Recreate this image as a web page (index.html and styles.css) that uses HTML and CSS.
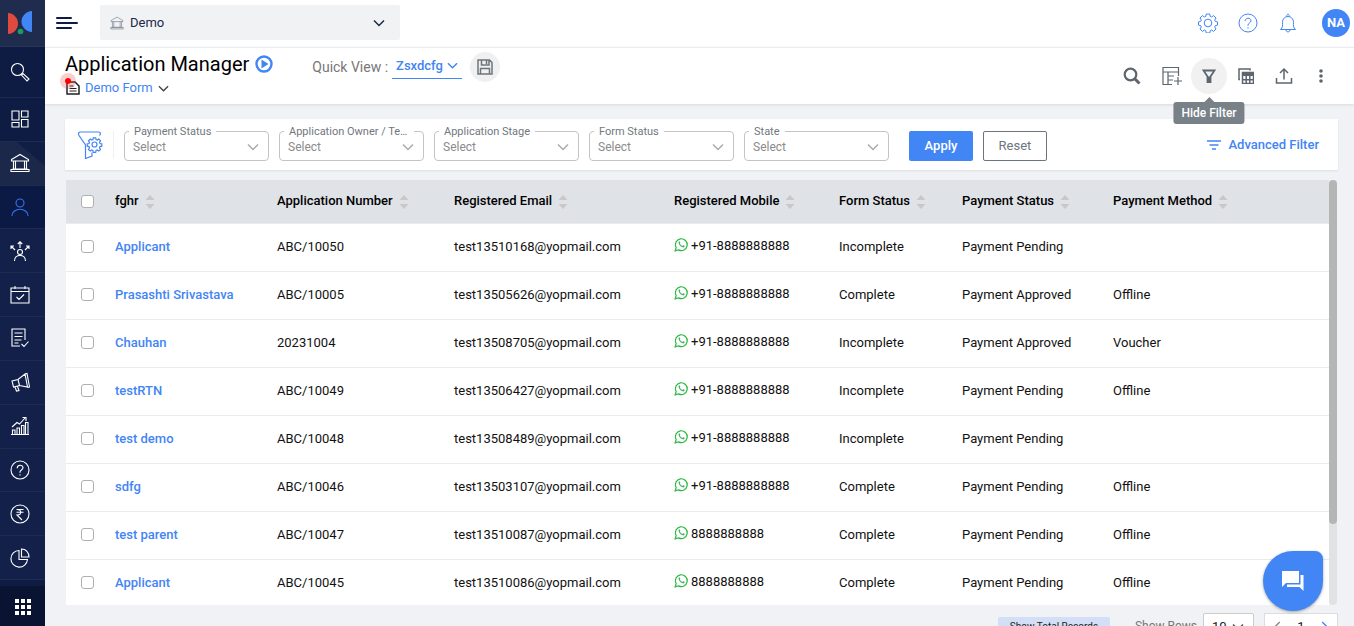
FILE: index.html
```html
<!DOCTYPE html>
<html lang="en">
<head>
  <meta charset="UTF-8">
  <meta name="viewport" content="width=device-width, initial-scale=1">
  <title>Application Manager</title>
  <link rel="stylesheet" href="styles.css">
</head>
<body>

  <!-- shared icons -->
  <svg class="sprite" aria-hidden="true">
    <symbol id="chevron" viewBox="0 0 12 12"><path d="M1 3.500l5 5 5-5" fill="none" stroke="currentColor" stroke-width="1.500"/></symbol>
    <symbol id="sort" viewBox="0 0 10 16"><path d="M5 1l4.500 5h-9zM5 15l4.500-5h-9z" fill="#c8c8c8"/></symbol>
    <symbol id="whatsapp" viewBox="0 0 16 16">
      <path d="M1.300 14.700l1-3.500a6.300 6.300 0 1 1 2.500 2.500z" fill="none" stroke="#2cb742" stroke-width="1.300"/>
      <path d="M5.800 4.500c-.9.500-1.100 1.600-.6 2.700.8 1.800 2.200 3.200 4.200 3.800 1 .3 1.900-.2 2.100-1.300l-1.700-.9-.8.900c-1.400-.5-2.300-1.400-2.900-2.700l.7-.8z" fill="#2cb742"/>
    </symbol>
    <symbol id="bank" viewBox="0 0 20 20">
      <path d="M1.500 6.500L10 1.500l8.500 5v1.500h-17zM3.500 8v8M5.500 8v8M14.500 8v8M16.500 8v8M2.500 16h15M1 18.500h18v-2H1z"/>
    </symbol>
    <symbol id="gear" viewBox="0 0 20 20">
      <circle cx="10" cy="10" r="3.800"/>
      <path d="M8.300 1h3.400l.5 2.300 1.400.6 2-1.300 2.400 2.400-1.300 2 .6 1.400 2.200.5v3.200l-2.200.5-.6 1.400 1.300 2-2.400 2.400-2-1.300-1.400.6-.5 2.300H8.300l-.5-2.300-1.400-.6-2 1.300L2 16l1.300-2-.6-1.400L.5 12.100V8.900l2.200-.5.6-1.400L2 5l2.400-2.400 2 1.300 1.400-.6z"/>
    </symbol>
    <symbol id="help" viewBox="0 0 20 20">
      <circle cx="10" cy="10" r="9"/><path d="M7.200 8.200c0-4 5.800-3.800 5.800-.4 0 2-3 2.300-3 4.200v.8M10 14.200v1.400"/>
    </symbol>
  </svg>

  <div class="app">
    <nav class="sidebar" aria-label="Main">
      <a href="#" class="logo" aria-label="Home">
        <svg width="26" height="24" viewBox="0 0 26 24">
          <path d="M1 2c6 .5 10 5 10 10.500S7 22.500 1 23z" fill="#de4b3e"/>
          <path d="M25 0c-6 .5-10.500 5-10.500 10.500S19 20.500 25 21z" fill="#4285f4"/>
          <circle cx="13.500" cy="20.500" r="2.800" fill="#1a9c5b"/>
        </svg>
      </a>
      <a href="#" class="nav-item nav-search" aria-label="Search">
        <svg viewBox="0 0 20 20"><circle cx="7.500" cy="7.500" r="6"/><path d="M11.500 13l1.500-1.500 6 5.500-2 2z"/></svg>
      </a>
      <a href="#" class="nav-item" aria-label="Dashboard">
        <svg viewBox="0 0 20 20"><path d="M2 2h7v9H2zM11.500 2H18v6h-6.500zM2 13.500h7V18H2zM11.500 10.500H18V18h-6.500z"/></svg>
      </a>
      <a href="#" class="nav-item nav-parent" aria-label="Institute"><svg><use href="#bank"/></svg></a>
      <a href="#" class="nav-item nav-active" aria-label="Applicants">
        <svg viewBox="0 0 20 20"><circle cx="10" cy="6" r="4"/><path d="M2 19c0-9 16-9 16 0"/></svg>
      </a>
      <a href="#" class="nav-item" aria-label="Allocation">
        <svg viewBox="0 0 20 20"><circle cx="10" cy="11" r="2.500"/><path d="M4.500 20c0-7.500 11-7.500 11 0M10 7V1M7.800 3L10 .8 12.200 3M5 9L1 5M1 8V5h3M15 9l4-4M16 5h3v3"/></svg>
      </a>
      <a href="#" class="nav-item" aria-label="Calendar">
        <svg viewBox="0 0 20 20"><path d="M1 3h18v15H1zM1 6.500h18M5 1v3M15 1v3M6.500 12l2.500 2.500L14 9.500"/></svg>
      </a>
      <a href="#" class="nav-item" aria-label="Forms">
        <svg viewBox="0 0 20 20"><path d="M15 12V1H2v17h8M4.500 5h8M4.500 8.500h8M4.500 12h7M4.500 15h4M11.500 16l2.500 2.500 4.500-5"/></svg>
      </a>
      <a href="#" class="nav-item" aria-label="Campaigns">
        <svg viewBox="0 0 20 20"><path d="M2 9l6-1.500L15 2l2.500 13-8-1.500-6 1.500zM8 7.500l1.500 6M15 2l2-.5L19.500 15l-2 .5M5 15l1.500 4 2.500-.5-1.500-4"/></svg>
      </a>
      <a href="#" class="nav-item" aria-label="Reports">
        <svg viewBox="0 0 20 20"><path d="M1 18.500h18M2.500 18v-4h2.500v4M7 18v-6h2.500v6M11.500 18V9.500H14V18M15.500 18V6.500H18V18M2 11l5-4.500 2.500 1.500L15 2M12.500 1.500H16V5"/></svg>
      </a>
      <a href="#" class="nav-item" aria-label="Help"><svg><use href="#help"/></svg></a>
      <a href="#" class="nav-item" aria-label="Payments">
        <svg viewBox="0 0 20 20"><circle cx="10" cy="10" r="9"/><path d="M6.500 5.500h7M6.500 8.200h7M7 5.500c5 0 5 5.500 0 5.500l5 5"/></svg>
      </a>
      <a href="#" class="nav-item" aria-label="Analytics">
        <svg viewBox="0 0 20 20"><path d="M9 2.500a8.300 8.300 0 1 0 8.500 9H9zM11.500 1v8H19c0-4.500-3-8-7.500-8z"/></svg>
      </a>
      <button class="apps" type="button" aria-label="Apps">
        <svg width="18" height="18" viewBox="0 0 18 18" fill="#fff"><path d="M1 1h4v4H1zM7 1h4v4H7zM13 1h4v4h-4zM1 7h4v4H1zM7 7h4v4H7zM13 7h4v4h-4zM1 13h4v4H1zM7 13h4v4H7zM13 13h4v4h-4z"/></svg>
      </button>
    </nav>

    <div class="main">
      <header class="topbar">
        <button class="menu-btn" type="button" aria-label="Menu">
          <svg width="22" height="14" viewBox="0 0 22 14"><path d="M1 2h14M1 7h20M1 12h14" stroke="#0e1b42" stroke-width="2" stroke-linecap="round"/></svg>
        </button>
        <button class="institute" type="button">
          <svg class="institute-icon" width="14" height="14"><use href="#bank"/></svg>
          <span>Demo</span>
          <svg class="institute-arrow" width="12" height="12"><use href="#chevron"/></svg>
        </button>
        <div class="top-actions">
          <button type="button" aria-label="Settings"><svg><use href="#gear"/></svg></button>
          <button type="button" aria-label="Help"><svg><use href="#help"/></svg></button>
          <button type="button" aria-label="Notifications">
            <svg viewBox="0 0 20 20"><path d="M2.500 16.500c2.500-2 2-4.500 2-7 0-8 11-8 11 0 0 2.500-.5 5 2 7zM8 17c0 2.500 4 2.500 4 0M8.800 3.500c-.5-3 2.900-3 2.400 0"/></svg>
          </button>
          <button class="avatar" type="button">NA</button>
        </div>
      </header>

      <section class="page-head">
        <div class="page-title">
          <h1>Application Manager
            <svg width="18" height="18" viewBox="0 0 18 18"><circle cx="9" cy="9" r="7.500" fill="none" stroke="#4285f4" stroke-width="2.400"/><path d="M6.500 4.500v9L13.500 9z" fill="#4285f4"/></svg>
          </h1>
          <button class="form-picker" type="button">
            <span class="form-icon">
              <svg width="14" height="14" viewBox="0 0 14 14"><path d="M1 1h8l4 4v8H1z" fill="#fff" stroke="#222" stroke-width="1.500"/><path d="M3.500 5h4M3.500 7.500h7M3.500 10h7" stroke="#222" stroke-width="1.200"/></svg>
            </span>
            Demo Form
            <svg class="form-arrow" width="11" height="11"><use href="#chevron"/></svg>
          </button>
        </div>
        <div class="quick-view">
          <span>Quick View :</span>
          <button class="view-picker" type="button">Zsxdcfg <svg width="11" height="11"><use href="#chevron"/></svg></button>
          <button class="round-btn save-btn" type="button" aria-label="Save view">
            <svg width="16" height="16" viewBox="0 0 16 16" fill="none" stroke="#6c757d" stroke-width="1.500"><path d="M1 1h11.500L15 3.500V15H1zM4.500 1v5H12V1M3.500 15V9.500h9V15M9.500 1.500V5"/></svg>
          </button>
        </div>
        <div class="head-actions">
          <button type="button" aria-label="Search">
            <svg width="18" height="18" viewBox="0 0 18 18" fill="none" stroke="#5d666f"><circle cx="7.500" cy="7.500" r="5.800" stroke-width="2.200"/><path d="M11.500 11.500l5 5" stroke-width="3"/></svg>
          </button>
          <button type="button" aria-label="Add column">
            <svg width="20" height="20" viewBox="0 0 20 20" fill="none" stroke="#5d666f" stroke-width="1.200"><path d="M10 18.500H1v-17h15.500V10M1 6h15.500M6 6v12.500M6 10h6M6 14h5M16 11v8M12 15h8"/></svg>
          </button>
          <button class="filter-toggle" type="button" aria-label="Hide Filter" aria-describedby="filter-tip">
            <svg width="14" height="14" viewBox="0 0 14 14"><path d="M1.500 1.500h11L8.500 7.500V13h-3V7.500z" fill="none" stroke="#5d666f" stroke-width="1.800"/><path d="M5.500 7.500h3V13h-3z" fill="#5d666f"/></svg>
            <span class="tooltip" id="filter-tip" role="tooltip">Hide Filter</span>
          </button>
          <button type="button" aria-label="Calculator">
            <svg width="16" height="16" viewBox="0 0 16 16" fill="none" stroke="#5d666f" stroke-width="1.500"><path d="M2 11.500H1V1h11v1.500M4.500 4.500h11v11h-11z"/><path d="M4.500 6.500h11" stroke-width="3"/><path d="M4.500 11.700h11M8.200 8v7M11.800 8v7"/></svg>
          </button>
          <button type="button" aria-label="Export">
            <svg width="18" height="18" viewBox="0 0 18 18" fill="none" stroke="#5d666f" stroke-width="1.500"><path d="M1.500 11v5h15v-5M9 12.500V2M5 6l4-4 4 4"/></svg>
          </button>
          <button type="button" aria-label="More">
            <svg width="4" height="14" viewBox="0 0 4 14" fill="#5d666f"><circle cx="2" cy="2" r="1.800"/><circle cx="2" cy="7" r="1.800"/><circle cx="2" cy="12" r="1.800"/></svg>
          </button>
        </div>
      </section>

      <main class="content">
        <form class="filters">
          <div class="filter-icon">
            <svg width="26" height="28" viewBox="0 0 26 28" fill="none" stroke="#4285f4" stroke-width="1.200">
              <path d="M15 21.500V25l-6.500 2.500V14L2 4.500C1 2.500 1.500 1 3.500 1h18c2 0 2.500 2 1 3.500"/>
              <circle cx="17.500" cy="13.500" r="2.500"/>
              <path d="M16.300 6.800h2.400l.4 1.800 1.200.5 1.500-1 1.700 1.700-1 1.500.5 1.200 1.800.3v2.400l-1.800.4-.5 1.200 1 1.500-1.700 1.700-1.500-1-1.200.5-.4 1.800h-2.400l-.4-1.800-1.200-.5-1.500 1-1.700-1.700 1-1.500-.5-1.200-1.800-.4v-2.400l1.800-.3.500-1.200-1-1.500 1.700-1.700 1.500 1 1.200-.5z"/>
            </svg>
          </div>
          <div class="field">
            <label for="paymentStatus">Payment Status</label>
            <select id="paymentStatus"><option>Select</option></select>
            <svg><use href="#chevron"/></svg>
          </div>
          <div class="field">
            <label for="owner">Application Owner / Team</label>
            <select id="owner"><option>Select</option></select>
            <svg><use href="#chevron"/></svg>
          </div>
          <div class="field">
            <label for="stage">Application Stage</label>
            <select id="stage"><option>Select</option></select>
            <svg><use href="#chevron"/></svg>
          </div>
          <div class="field">
            <label for="formStatus">Form Status</label>
            <select id="formStatus"><option>Select</option></select>
            <svg><use href="#chevron"/></svg>
          </div>
          <div class="field">
            <label for="state">State</label>
            <select id="state"><option>Select</option></select>
            <svg><use href="#chevron"/></svg>
          </div>
          <button class="btn btn-apply" type="button">Apply</button>
          <button class="btn btn-reset" type="reset">Reset</button>
          <a href="#" class="advanced">
            <svg width="14" height="10" viewBox="0 0 14 10" stroke="#4285f4" stroke-width="1.600"><path d="M0 1h14M2.500 5h9M5 9h4"/></svg>
            Advanced Filter
          </a>
        </form>

        <div class="table-wrap">
          <div class="table-scroll">
            <table>
              <colgroup>
                <col class="c-check"><col class="c-name"><col class="c-number"><col class="c-email">
                <col class="c-mobile"><col class="c-form"><col class="c-pay"><col>
              </colgroup>
              <thead>
                <tr>
                  <th><input type="checkbox" aria-label="Select all"></th>
                  <th>fghr<svg><use href="#sort"/></svg></th>
                  <th>Application Number<svg><use href="#sort"/></svg></th>
                  <th>Registered Email<svg><use href="#sort"/></svg></th>
                  <th>Registered Mobile<svg><use href="#sort"/></svg></th>
                  <th>Form Status<svg><use href="#sort"/></svg></th>
                  <th>Payment Status<svg><use href="#sort"/></svg></th>
                  <th>Payment Method<svg><use href="#sort"/></svg></th>
                </tr>
              </thead>
              <tbody>
                <tr>
                  <td><input type="checkbox" aria-label="Select row"></td>
                  <td><a href="#">Applicant</a></td>
                  <td>ABC/10050</td>
                  <td>test13510168@yopmail.com</td>
                  <td class="mobile"><svg><use href="#whatsapp"/></svg>+91-8888888888</td>
                  <td>Incomplete</td>
                  <td>Payment Pending</td>
                  <td></td>
                </tr>
                <tr>
                  <td><input type="checkbox" aria-label="Select row"></td>
                  <td><a href="#">Prasashti Srivastava</a></td>
                  <td>ABC/10005</td>
                  <td>test13505626@yopmail.com</td>
                  <td class="mobile"><svg><use href="#whatsapp"/></svg>+91-8888888888</td>
                  <td>Complete</td>
                  <td>Payment Approved</td>
                  <td>Offline</td>
                </tr>
                <tr>
                  <td><input type="checkbox" aria-label="Select row"></td>
                  <td><a href="#">Chauhan</a></td>
                  <td>20231004</td>
                  <td>test13508705@yopmail.com</td>
                  <td class="mobile"><svg><use href="#whatsapp"/></svg>+91-8888888888</td>
                  <td>Incomplete</td>
                  <td>Payment Approved</td>
                  <td>Voucher</td>
                </tr>
                <tr>
                  <td><input type="checkbox" aria-label="Select row"></td>
                  <td><a href="#">testRTN</a></td>
                  <td>ABC/10049</td>
                  <td>test13506427@yopmail.com</td>
                  <td class="mobile"><svg><use href="#whatsapp"/></svg>+91-8888888888</td>
                  <td>Incomplete</td>
                  <td>Payment Pending</td>
                  <td>Offline</td>
                </tr>
                <tr>
                  <td><input type="checkbox" aria-label="Select row"></td>
                  <td><a href="#">test demo</a></td>
                  <td>ABC/10048</td>
                  <td>test13508489@yopmail.com</td>
                  <td class="mobile"><svg><use href="#whatsapp"/></svg>+91-8888888888</td>
                  <td>Incomplete</td>
                  <td>Payment Pending</td>
                  <td></td>
                </tr>
                <tr>
                  <td><input type="checkbox" aria-label="Select row"></td>
                  <td><a href="#">sdfg</a></td>
                  <td>ABC/10046</td>
                  <td>test13503107@yopmail.com</td>
                  <td class="mobile"><svg><use href="#whatsapp"/></svg>+91-8888888888</td>
                  <td>Complete</td>
                  <td>Payment Pending</td>
                  <td>Offline</td>
                </tr>
                <tr>
                  <td><input type="checkbox" aria-label="Select row"></td>
                  <td><a href="#">test parent</a></td>
                  <td>ABC/10047</td>
                  <td>test13510087@yopmail.com</td>
                  <td class="mobile"><svg><use href="#whatsapp"/></svg>8888888888</td>
                  <td>Complete</td>
                  <td>Payment Pending</td>
                  <td>Offline</td>
                </tr>
                <tr>
                  <td><input type="checkbox" aria-label="Select row"></td>
                  <td><a href="#">Applicant</a></td>
                  <td>ABC/10045</td>
                  <td>test13510086@yopmail.com</td>
                  <td class="mobile"><svg><use href="#whatsapp"/></svg>8888888888</td>
                  <td>Complete</td>
                  <td>Payment Pending</td>
                  <td>Offline</td>
                </tr>
              </tbody>
            </table>
          </div>
          <div class="scroll-track"><div class="scroll-thumb"></div></div>
        </div>

        <div class="table-footer">
          <button class="total-btn" type="button">Show Total Records</button>
          <label for="rows">Show Rows</label>
          <div class="rows-field">
            <select id="rows"><option>10</option></select>
            <svg><use href="#chevron"/></svg>
          </div>
          <div class="pager">
            <button type="button" aria-label="Previous"><svg class="prev"><use href="#chevron"/></svg></button>
            <span>1</span>
            <button type="button" aria-label="Next"><svg class="next"><use href="#chevron"/></svg></button>
          </div>
        </div>
      </main>
    </div>
  </div>

  <button class="chat" type="button" aria-label="Chat">
    <svg width="22" height="22" viewBox="0 0 22 22" fill="#fff"><path d="M0 1h17v12H4l-4 4zM18.500 5H21.500v16l-4-4H5v-2.500h13.500z"/></svg>
  </button>

</body>
</html>
```
FILE: styles.css
```css
* { box-sizing: border-box; }

body {
  margin: 0;
  overflow: hidden;
  font-family: Roboto, "Liberation Sans", sans-serif;
  font-size: 13px;
  color: #111;
  background: #f1f2f5;
}

button {
  font: inherit;
  color: inherit;
  padding: 0;
  border: 0;
  background: none;
  cursor: pointer;
}
a { color: #4285f4; text-decoration: none; }
svg { flex: none; }
.sprite { position: absolute; width: 0; height: 0; }

.app { display: flex; height: 100vh; }

/* sidebar */
.sidebar {
  flex: none;
  width: 45px;
  display: flex;
  flex-direction: column;
  background: #0e1b42;
}
.logo {
  display: flex;
  align-items: center;
  height: 47px;
  padding-left: 7px;
  background: #1f2c4e;
  border-bottom: 1px solid #2a3658;
}
.nav-item {
  flex: 1;
  display: flex;
  align-items: center;
  padding-left: 10px;
  background: #13214a;
  border-bottom: 1px solid #1d2b52;
}
.nav-item svg {
  width: 20px;
  height: 20px;
  fill: none;
  stroke: #fff;
  stroke-width: 1.1;
}
.nav-search { flex: none; height: 51px; background: #0e1b42; }
.nav-search + .nav-item { background: #0e1b42; }
.nav-parent { background: linear-gradient(40deg, #1b2849 70%, #101d45 71%); }
.nav-active { background: #0b1a45; }
.nav-active svg { stroke: #3574f0; }
.apps {
  height: 40px;
  margin-top: 6px;
  padding-top: 6px;
  background: #091433;
}

/* top bar */
.main { flex: 1; min-width: 0; background: #f1f2f5; }
.topbar {
  display: flex;
  align-items: center;
  height: 47px;
  padding: 0 4px 2px 11px;
  background: #fff;
}
.menu-btn { display: flex; }
.institute {
  display: flex;
  align-items: center;
  width: 300px;
  height: 35px;
  margin-left: 22px;
  padding: 0 15px 0 10px;
  background: #f1f2f4;
  border-radius: 2px;
  color: #1b2849;
}
.institute span { margin-left: 6px; }
.institute-icon { fill: none; stroke: #7d8594; }
.institute-arrow { margin-left: auto; }
.top-actions {
  display: flex;
  align-items: center;
  gap: 20px;
  margin-left: auto;
}
.top-actions button { display: flex; }
.top-actions svg {
  width: 20px;
  height: 20px;
  fill: none;
  stroke: #4285f4;
}
.top-actions .avatar {
  align-items: center;
  justify-content: center;
  width: 28px;
  height: 28px;
  margin-left: 4px;
  border-radius: 50%;
  background: #4285f4;
  color: #fff;
  font-weight: bold;
}

/* page header */
.page-head {
  display: flex;
  align-items: center;
  height: 57px;
  padding: 0 18px 0 20px;
  background: #fff;
  border-top: 1px solid #ebecee;
  box-shadow: 0 1px 3px rgba(0,0,0,0.1);
}
.page-title h1 {
  display: flex;
  align-items: center;
  gap: 6px;
  margin: 0;
  font-size: 20px;
  line-height: 24px;
  font-weight: 400;
  color: #000;
}
.form-picker {
  display: flex;
  align-items: center;
  line-height: 24px;
  padding-left: 1px;
  color: #4285f4;
}
.form-icon {
  position: relative;
  display: flex;
  margin-right: 5px;
}
.form-icon::before {
  content: "";
  position: absolute;
  left: -6px;
  top: -8px;
  width: 6px;
  height: 6px;
  border: 5px solid rgba(230,60,60,0.25);
  border-radius: 50%;
  box-sizing: content-box;
  background: #f00;
  background-clip: padding-box;
}
.form-arrow { margin-left: 5px; color: #444; }
.quick-view {
  display: flex;
  align-items: center;
  margin: 0 0 18px 39px;
  font-size: 14px;
  color: #777;
}
.view-picker {
  display: flex;
  align-items: center;
  gap: 4px;
  height: 24px;
  margin-left: 4px;
  padding: 0 4px 2px;
  border-bottom: 1px solid #4285f4;
  font-size: 13px;
  font-weight: 500;
  color: #4285f4;
}
.round-btn {
  display: flex;
  align-items: center;
  justify-content: center;
  width: 30px;
  height: 30px;
  border-radius: 50%;
  background: #f0f0f0;
}
.save-btn { margin-left: 8px; }
.head-actions {
  display: flex;
  align-items: center;
  margin-left: auto;
}
.head-actions button {
  display: flex;
  align-items: center;
  justify-content: center;
  width: 38px;
  height: 36px;
}
.head-actions button:first-child { width: 42px; }
.head-actions button:last-child { width: 30px; margin-left: 3px; }
.head-actions .filter-toggle {
  position: relative;
  width: 36px;
  border-radius: 50%;
  background: #f1f1f1;
}
.tooltip {
  position: absolute;
  z-index: 2;
  top: 44px;
  left: 50%;
  transform: translateX(-50%);
  padding: 0 8px;
  border-radius: 3px;
  background: #788188;
  color: #fff;
  font-size: 12px;
  font-weight: 500;
  line-height: 22px;
  white-space: nowrap;
}
.tooltip::before {
  content: "";
  position: absolute;
  left: 50%;
  top: -5px;
  margin-left: -5px;
  border: 5px solid transparent;
  border-top: 0;
  border-bottom-color: #788188;
}

/* filters */
.content { padding: 15px 16px 0 20px; }
.filters {
  display: flex;
  align-items: center;
  gap: 10px;
  height: 51px;
  padding: 0 19px 0 12px;
  background: #fff;
  box-shadow: 0 1px 2px rgba(0,0,0,0.08);
}
.filter-icon {
  display: flex;
  width: 37px;
  border-right: 1px solid #f0f0f0;
}
.field {
  position: relative;
  flex: 0 1 145px;
  min-width: 0;
  margin-top: 3px;
}
.field label {
  position: absolute;
  left: 5px;
  top: -6px;
  max-width: 130px;
  padding: 0 5px;
  overflow: hidden;
  background: #fff;
  color: #71777d;
  font-size: 11px;
  line-height: 14px;
  text-overflow: ellipsis;
  white-space: nowrap;
}
.field select {
  appearance: none;
  display: block;
  width: 100%;
  height: 30px;
  padding: 2px 8px 0;
  border: 1px solid #c4c4c4;
  border-radius: 4px;
  background: #fff;
  color: #8b8b8b;
  font: inherit;
  font-size: 12px;
}
.field svg, .rows-field svg {
  position: absolute;
  right: 10px;
  top: 10px;
  width: 12px;
  height: 12px;
  color: #aaa;
  pointer-events: none;
}
.btn {
  width: 64px;
  height: 30px;
  margin-top: 2px;
  border-radius: 2px;
}
.btn-apply {
  margin-left: 10px;
  background: #4285f4;
  color: #fff;
  font-weight: 500;
}
.btn-reset { border: 1px solid #6c757d; color: #6c757d; }
.advanced {
  display: flex;
  align-items: center;
  gap: 7px;
  margin-left: auto;
  font-weight: 500;
}

/* table */
.table-wrap {
  display: flex;
  height: calc(100vh - 201px);
  margin: 10px 1px 0 1px;
}
.table-scroll { flex: 1; min-width: 0; overflow: hidden; background: #fff; }
table { width: 100%; table-layout: fixed; border-collapse: collapse; }
.c-check { width: 39px; }
.c-name { width: 162px; }
.c-number { width: 177px; }
.c-email { width: 220px; }
.c-mobile { width: 165px; }
.c-form { width: 123px; }
.c-pay { width: 151px; }
th, td {
  height: 48px;
  padding: 0 10px 2px;
  border-bottom: 1px solid #ebebeb;
  text-align: left;
  font-weight: 400;
  white-space: nowrap;
}
th {
  height: 43px;
  padding-bottom: 0;
  background: #dfe2e7;
  color: #000;
  font-weight: 500;
}
th svg { width: 10px; height: 16px; margin-left: 6px; vertical-align: -5px; }
td a { font-weight: 500; }
td:first-child, th:first-child { padding-left: 15px; padding-right: 0; }
td.mobile { padding-bottom: 4px; }
.mobile svg { width: 15px; height: 15px; margin-right: 2px; vertical-align: -2px; }
input[type="checkbox"] {
  appearance: none;
  display: block;
  width: 13px;
  height: 13px;
  margin: 0;
  border: 1px solid #b0b0b0;
  border-radius: 3px;
  background: #fff;
}
.scroll-track { width: 8px; border-radius: 4px; background: #e1e2e3; }
.scroll-thumb { height: 81%; border-radius: 4px; background: #b4b6b6; }

/* footer */
.table-footer {
  display: flex;
  justify-content: flex-end;
  align-items: center;
  margin-top: 8px;
  color: #777;
  font-size: 12px;
}
.total-btn {
  width: 112px;
  height: 18px;
  margin-right: 25px;
  border-radius: 2px;
  background: #d3def7;
  color: #222;
  font-size: 10px;
}
.rows-field { position: relative; margin: 0 10px 0 6px; }
.rows-field select {
  appearance: none;
  display: block;
  width: 51px;
  height: 26px;
  padding: 0 8px;
  border: 1px solid #ccc;
  border-radius: 2px;
  background: #fff;
  color: #222;
  font: inherit;
  font-size: 13px;
}
.rows-field svg { top: 8px; color: #555; }
.pager {
  display: flex;
  align-items: center;
  justify-content: space-around;
  width: 74px;
  height: 26px;
  border: 1px solid #ddd;
  background: #fff;
  color: #222;
  font-size: 13px;
}
.pager svg { display: block; width: 11px; height: 11px; color: #888; }
.pager .prev { transform: rotate(90deg); }
.pager .next { transform: rotate(-90deg); color: #4285f4; }

.chat {
  position: fixed;
  right: 31px;
  bottom: 15px;
  display: flex;
  align-items: center;
  justify-content: center;
  width: 60px;
  height: 60px;
  border-radius: 50% 8px 50% 50%;
  background: #4285f4;
  box-shadow: 0 1px 3px rgba(0,0,0,0.35);
}
```
